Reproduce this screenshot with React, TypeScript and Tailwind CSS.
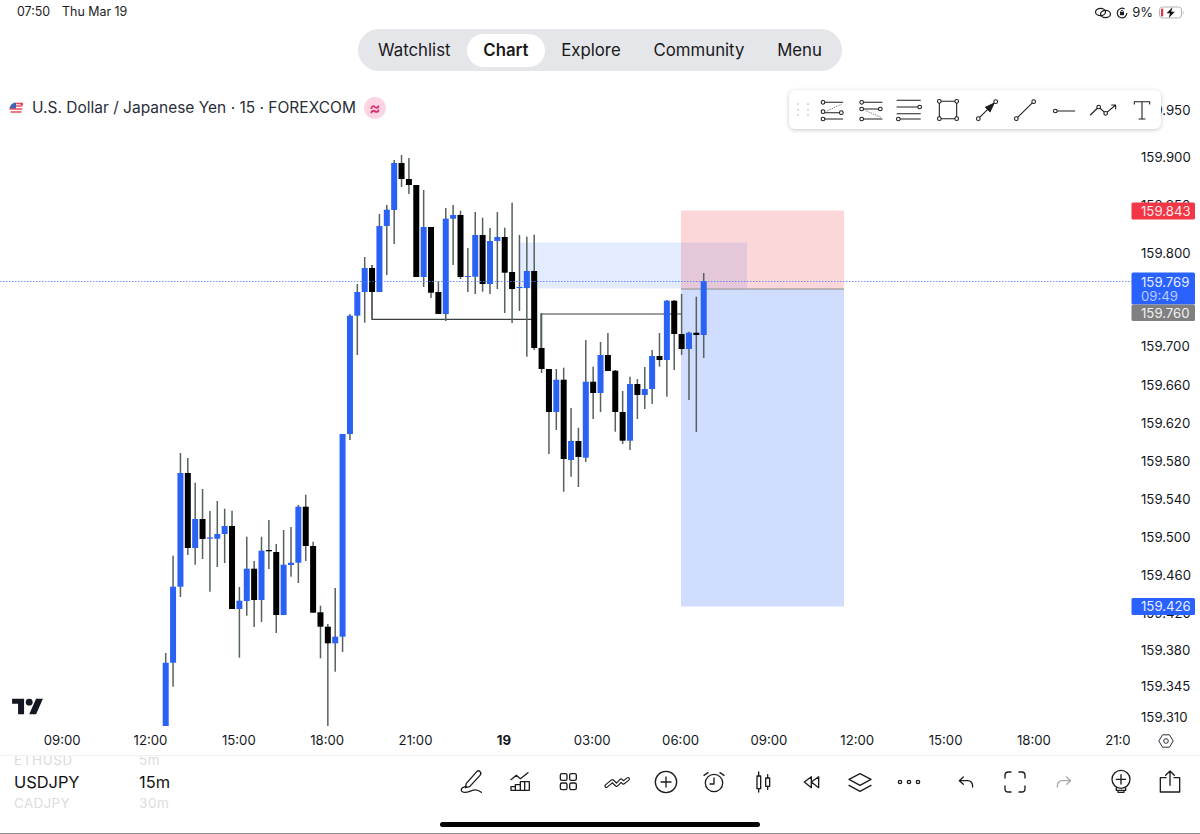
import React from 'react';

const sans = 'font-["Inter","Liberation_Sans",sans-serif]';

type Candle = [number, number, number, number, 'b' | 'k'];

// wick top, wick bottom, body top, body bottom (page px)
const candles: Candle[] = [
  [653, 726, 662.7, 726, 'b'], [555.7, 686.7, 586.7, 662.7, 'b'], [453, 597, 473, 586.7, 'b'], [458, 555, 473, 548, 'k'],
  [482.7, 564.7, 519, 548, 'b'], [489, 559, 519, 539, 'k'], [511, 591.7, 537.4, 538.7, 'b'], [501, 567, 534, 538.7, 'b'],
  [508.7, 563, 526, 534, 'b'], [510.7, 609, 526, 609, 'k'], [587, 657.7, 600.7, 609, 'b'], [536.7, 615.7, 568.7, 601, 'b'],
  [561, 627, 568.7, 600, 'k'], [536.7, 622, 550.7, 600, 'b'], [520, 569, 550, 551.3, 'k'], [544, 633, 552, 615, 'k'],
  [530, 615, 564.7, 615, 'b'], [527, 576.7, 562.7, 565, 'b'], [505, 583, 506.7, 562.7, 'b'], [494.7, 561, 506.7, 546, 'k'],
  [541.7, 612.7, 546, 612.7, 'k'], [605.7, 658.3, 612.3, 626.7, 'k'], [624, 726, 626.7, 643.3, 'k'], [588, 671.7, 636.7, 643.3, 'b'],
  [434, 652, 434, 636.7, 'b'], [314, 440, 315.7, 434, 'b'], [284, 355, 292, 315.7, 'b'], [257, 322.7, 268, 292, 'b'],
  [265, 319, 268, 292, 'k'], [214, 292, 226, 292, 'b'], [205, 275, 209.7, 226, 'b'], [160, 244, 163, 210, 'b'],
  [155, 187, 163, 179, 'k'], [158, 194, 179, 185, 'k'], [185, 277, 185, 277, 'k'], [190, 287, 227, 277, 'b'],
  [227, 298, 227, 292.7, 'k'], [281, 314, 292, 314, 'k'], [208, 321, 218.7, 314, 'b'], [205, 265, 215, 218.7, 'b'],
  [210.7, 279, 215, 277, 'k'], [248, 292, 276, 277, 'b'], [212, 294, 235, 276.7, 'b'], [217.7, 291.7, 235, 284, 'k'],
  [228, 294, 241, 284, 'b'], [212, 289, 237, 241, 'b'], [227.7, 313, 237, 272.7, 'k'], [202.7, 323, 272, 289, 'k'],
  [235, 311, 287, 288, 'b'], [236.7, 356.7, 271, 288, 'b'], [234.7, 350, 271, 348, 'k'], [313, 373, 348, 369, 'k'],
  [369, 454, 369, 412, 'k'], [369, 430, 379.7, 412, 'b'], [367.7, 491.7, 379.7, 459, 'k'], [408, 476.7, 441, 460, 'b'],
  [427.7, 487, 441, 457, 'k'], [340, 462, 381.7, 457.7, 'b'], [366.7, 419, 381.7, 393, 'k'], [342, 412, 355, 393, 'b'],
  [333, 371, 355, 371, 'k'], [370, 431.7, 370.7, 412, 'k'], [391, 444, 412, 440.7, 'k'], [376.7, 450, 384, 440.7, 'b'],
  [379, 419, 384, 395, 'k'], [367, 409, 389, 395, 'b'], [350, 404, 356, 389, 'b'], [333, 366.7, 356, 360, 'k'],
  [300, 396.7, 300.7, 360, 'b'], [300, 370, 300.7, 334, 'k'], [294, 355, 334, 349, 'k'], [331.7, 400, 332.7, 349, 'b'],
  [296.7, 432, 332.7, 335, 'k'], [273, 358, 281, 335, 'b'],
];

const prices: [string, number][] = [
  ['159.950', 110], ['159.900', 157], ['159.850', 205], ['159.800', 253], ['159.700', 346], ['159.660', 385],
  ['159.620', 423], ['159.580', 461], ['159.540', 499], ['159.500', 537], ['159.460', 575], ['159.420', 613],
  ['159.380', 650], ['159.345', 686], ['159.310', 717],
];

const times = ['09:00', '12:00', '15:00', '18:00', '21:00', '19', '03:00', '06:00', '09:00', '12:00', '15:00', '18:00'];

function Chart() {
  return (
    <svg viewBox="0 71 1200 684" className="absolute inset-0 h-full w-full">
      <rect x="520" y="242.5" width="227" height="46" fill="#2962ff" fillOpacity="0.13" />
      <rect x="681" y="210.5" width="163" height="78.5" fill="#f23645" fillOpacity="0.2" />
      <rect x="681" y="289" width="163" height="317.5" fill="#2962ff" fillOpacity="0.22" />
      <line x1="681" y1="289" x2="844" y2="289" stroke="#8a8a8a" strokeWidth="1" />
      <path d="M372 265V319.4H532M541 348V314H681" fill="none" stroke="#3a4040" strokeWidth="1.2" />
      {candles.map(([wt, wb, bt, bb, c], i) => {
        const x = 165.7 + 7.37 * i;
        return (
          <g key={i}>
            <rect x={x - 0.75} y={wt} width="1.5" height={wb - wt} fill="#56625f" />
            <rect x={x - 3} y={bt} width="6" height={Math.max(bb - bt, 1)} fill={c === 'b' ? '#2962f5' : '#000'} />
          </g>
        );
      })}
      <line x1="0" y1="281.5" x2="1132" y2="281.5" stroke="#4f7dff" strokeWidth="1" strokeDasharray="1.5 1.5" strokeOpacity="0.85" />
      <g className={sans} fontSize="13.2" fill="#131722">
        {prices.map(([p, y]) => (
          <text key={p} x="1141" y={y + 5}>{p}</text>
        ))}
      </g>
      <g className={sans} fontSize="13.2">
        <rect x="1131.5" y="202.5" width="63.5" height="17" rx="1.5" fill="#f23645" />
        <text x="1141" y="216" fill="#ffe9ea">159.843</text>
        <rect x="1131.5" y="272.5" width="63.5" height="32" rx="1.5" fill="#2962ff" />
        <text x="1141" y="286.5" fill="#e8eeff">159.769</text>
        <text x="1141" y="300.5" fill="#b9cbff">09:49</text>
        <rect x="1131.5" y="304.5" width="63.5" height="16.5" rx="1.5" fill="#808080" />
        <text x="1141" y="317.5" fill="#f2f2f2">159.760</text>
        <rect x="1131.5" y="598" width="63.5" height="17" rx="1.5" fill="#2962ff" />
        <text x="1141" y="611" fill="#e8eeff">159.426</text>
      </g>
    </svg>
  );
}

function Ico({ children, color = '#1c1c1e', sw = 4 }: { children: React.ReactNode; color?: string; sw?: number }) {
  return (
    <svg viewBox="-42 -42 84 84" className="h-[28px] w-[28px]" fill="none" stroke={color} strokeWidth={sw} strokeLinecap="round" strokeLinejoin="round">
      {children}
    </svg>
  );
}

const Dot = ({ x, y }: { x: number; y: number }) => <circle cx={x} cy={y} r="5.5" fill="#fff" />;

const drawingTools = [
  <>
    <path d="M-22 -23H32M-20 8H23M-22 27H32" />
    <path d="M-16 3L29 -17" strokeDasharray="3 3" strokeWidth="2" strokeLinecap="butt" />
    <Dot x={-27} y={-23} /><Dot x={-27} y={5} /><Dot x={-27} y={27} /><Dot x={28} y={8} />
  </>,
  <>
    <path d="M-23 -23H33M-23 -3H23M-23 27H33" />
    <path d="M-16 2L30 22" strokeDasharray="3 3" strokeWidth="2" strokeLinecap="butt" />
    <Dot x={-28} y={-23} /><Dot x={-28} y={-3} /><Dot x={28} y={-3} /><Dot x={-28} y={27} />
  </>,
  <>
    <path d="M-36 -29H34M-36 -9H27M-36 11H34M-27 27H34" />
    <Dot x={32} y={-9} /><Dot x={-32} y={27} />
  </>,
  <>
    <rect x="-26" y="-26" width="52" height="52" />
    <Dot x={-26} y={-26} /><Dot x={26} y={-26} /><Dot x={-26} y={26} /><Dot x={26} y={26} />
  </>,
  <>
    <path d="M-26 26L26 -25" />
    <path d="M21 -20L-4 -8L9 5Z" fill="#1c1c1e" />
    <Dot x={-26} y={26} /><Dot x={26} y={-25} />
  </>,
  <>
    <path d="M-26 26L26 -25" />
    <Dot x={-26} y={26} /><Dot x={26} y={-25} />
  </>,
  <>
    <path d="M-26 3H32" />
    <Dot x={-26} y={3} />
  </>,
  <>
    <path d="M-38 15L-13 -9L8 10L38 -15M26 -15H38V-3" />
    <Dot x={-13} y={-9} /><Dot x={8} y={10} />
  </>,
  <path d="M-23 -18V-25H23V-18M0 -25V27M-9 27H9" />,
];

const bottomLeft = [
  <>
    <path d="M18 -32Q24 -36 28 -30Q32 -26 27 -20L-4 14L-17 17L-14 4Z" />
    <path d="M-14 14C-32 15 -34 30 -20 31C0 32 8 14 31 31" />
  </>,
  <>
    <path d="M-27 -7L-11 -20L1 -10L24 -28" />
    <path d="M-27 25V14H-14V25ZM-14 25V8H1V25ZM1 25V-1H28V25ZM14 25V-1M-27 25H28" />
  </>,
  <>
    <rect x="-23" y="-25" width="20" height="20" rx="5" />
    <rect x="5" y="-25" width="20" height="20" rx="5" />
    <rect x="-23" y="3" width="20" height="20" rx="5" />
    <rect x="5" y="3" width="20" height="20" rx="5" />
  </>,
  <>
    <path d="M-32 12L-14 -3L-1 9L12 -5L19 2L33 -9" strokeWidth="12" />
    <path d="M-32 12L-14 -3L-1 9L12 -5L19 2L33 -9" stroke="#fff" strokeWidth="5" />
  </>,
  <>
    <circle r="32" />
    <path d="M-15 0H15M0 -15V15" />
  </>,
  <>
    <circle cy="3" r="26" />
    <path d="M0 -12V6H-12M-30 -20L-18 -28M30 -20L18 -28" />
  </>,
  <>
    <path d="M-13 -30V-18M-13 20V30M14 -22V-12M14 13V22" />
    <rect x="-18" y="-18" width="11" height="38" />
    <rect x="8" y="-12" width="12" height="25" />
  </>,
  <path d="M-2 -16L-23 0L-2 17ZM20 -16L-2 0L20 17Z" />,
];

const bottomRight = [
  <>
    <path d="M-33 -8L0 -25L33 -8L0 10Z" />
    <path d="M-33 10L0 28L33 10" />
  </>,
  <>
    <circle cx="-27" r="5" /><circle r="5" /><circle cx="27" r="5" />
  </>,
];

function Sep() {
  return <div className="h-[20px] w-px bg-[#f0f0f0]" />;
}

function Slot({ children }: { children: React.ReactNode }) {
  return <div className="flex w-[48.7px] justify-center">{children}</div>;
}

function BottomBar() {
  return (
    <div className="relative z-10 flex h-[78px] border-t border-[#f1f1f1] bg-white">
      <div className="flex h-[56px] w-[440px] flex-col items-start overflow-hidden pl-[14px]">
        <div className="-mt-[3px] flex h-[14px] text-[13.5px] leading-[14px] text-[#dcdcdc]">
          <span className="w-[125px] tracking-[0.6px]">ETHUSD</span>
          <span className="tracking-[0.6px]">5m</span>
        </div>
        <div className="mt-[3px] flex h-[24px] text-[16.4px] leading-[24px] text-[#111]">
          <span className="w-[125px]">USDJPY</span>
          <span>15m</span>
        </div>
        <div className="mt-[2px] flex h-[14px] text-[13.5px] leading-[14px] text-[#dcdcdc]">
          <span className="w-[125px] tracking-[0.3px]">CADJPY</span>
          <span className="tracking-[0.6px]">30m</span>
        </div>
      </div>
      <div className="flex h-[52px] items-center pl-[6.6px]">
        {bottomLeft.map((icon, i) => (
          <Slot key={i}><Ico>{icon}</Ico></Slot>
        ))}
        {bottomRight.map((icon, i) => (
          <Slot key={i}><Ico>{icon}</Ico></Slot>
        ))}
        <div className="flex w-0 justify-center"><Sep /></div>
        <div className="w-[8.5px]" />
        <Slot><Ico><path d="M-8 -15L-20 -4L-8 7M-20 -4H5Q20 -4 20 15" /></Ico></Slot>
        <Slot>
          <Ico>
            <path d="M-30 -12V-20Q-30 -30 -20 -30H-12M12 -30H20Q30 -30 30 -20V-12M30 12V20Q30 30 20 30H12M-12 30H-20Q-30 30 -30 20V12" />
          </Ico>
        </Slot>
        <Slot><Ico color="#a8a8a8"><path d="M8 -15L20 -4L8 7M20 -4H-5Q-20 -4 -20 15" /></Ico></Slot>
        <div className="flex w-0 justify-center"><Sep /></div>
        <div className="w-[8.6px]" />
        <Slot>
          <Ico>
            <circle cy="-8" r="27" />
            <path d="M-14 -8H14M0 -22V6M-14 18V25H14V18M-9 25V31H9V25" />
          </Ico>
        </Slot>
        <Slot>
          <Ico>
            <path d="M-12 -13H-29V30H29V-13H12M0 10V-33M-13 -20L0 -33L13 -20" />
          </Ico>
        </Slot>
      </div>
      <div className="absolute bottom-[6px] left-[440px] h-[5px] w-[320px] rounded-full bg-black" />
    </div>
  );
}

function StatusBar() {
  return (
    <div className="flex h-[29px] items-center justify-between pl-[17px] pr-[15px] pb-[4px] text-[12.4px] text-[#1c1c1e]">
      <div className="flex gap-[12px]">
        <span>07:50</span>
        <span>Thu Mar 19</span>
      </div>
      <div className="flex items-center gap-[4px]">
        <svg viewBox="0 0 18 12" className="h-[12px] w-[18px]" fill="none" stroke="#1c1c1e" strokeWidth="1.2">
          <ellipse cx="6.5" cy="5" rx="5" ry="3.6" />
          <ellipse cx="11.5" cy="7" rx="5" ry="3.6" />
        </svg>
        <svg viewBox="0 0 12 12" className="h-[12px] w-[12px]" fill="none" stroke="#1c1c1e" strokeWidth="1.2">
          <path d="M10.8 6A4.8 4.8 0 1 1 8.6 2" />
          <rect x="4" y="5" width="4" height="3.2" fill="#1c1c1e" stroke="none" />
          <circle cx="6" cy="4.6" r="1.2" strokeWidth="0.9" />
        </svg>
        <span className="text-[13px]">9%</span>
        <svg viewBox="0 0 26 13" className="ml-[2px] h-[13px] w-[26px]">
          <rect x="0.5" y="1" width="22" height="11" rx="3" fill="none" stroke="#b5b5b5" />
          <rect x="2" y="2.5" width="2.2" height="8" rx="1" fill="#e5303f" />
          <path d="M23.8 4.5Q25.5 6.5 23.8 8.5Z" fill="#b5b5b5" />
          <path d="M13.5 1.2L7.5 7.2H11L9.8 12L15.8 5.8H12.2Z" fill="#111" />
        </svg>
      </div>
    </div>
  );
}

function Nav() {
  const items = ['Watchlist', 'Chart', 'Explore', 'Community', 'Menu'];
  return (
    <div className="flex justify-center">
      <div className="flex h-[42px] items-center rounded-full bg-[#e5e6ea] p-[4px] text-[16.8px] text-[#18181b]">
        {items.map(item => (
          <div
            key={item}
            className={item === 'Chart'
              ? 'flex h-[33px] items-center rounded-full bg-white px-[16.4px] pt-px font-semibold'
              : 'flex h-[33px] items-center px-[16.4px] pt-px'}
          >
            {item}
          </div>
        ))}
      </div>
    </div>
  );
}

function Legend() {
  return (
    <div className="relative z-10 flex h-[72px] items-center gap-[7px] pl-[9px] pt-[2px] text-[15.5px] text-[#2a2e39]">
      <svg viewBox="0 0 16 16" className="h-[16px] w-[16px]">
        <circle cx="12.5" cy="4" r="3.5" fill="#fff" stroke="#eee" strokeWidth="0.5" />
        <circle cx="12.5" cy="4" r="1.6" fill="#e5303f" />
        <circle cx="7" cy="9" r="6.5" fill="#fff" />
        <path d="M.6 9A6.5 6.5 0 0 1 7 2.5V9Z" fill="#3f64b5" />
        <path d="M7 3.5H12M7 6H13.2M.6 9H13.5M1.5 12H12.5" stroke="#e8505b" strokeWidth="1.3" />
      </svg>
      <span>U.S. Dollar / Japanese Yen · 15 · FOREXCOM</span>
      <span className="ml-[1px] flex h-[22px] w-[22px] items-center justify-center rounded-full bg-[#fbd5e4] text-[17px] font-semibold leading-none text-[#d6306f]">≈</span>
    </div>
  );
}

function DrawingToolbar() {
  return (
    <div className="absolute left-[788.5px] top-[19px] z-20 flex h-[39px] w-[372.5px] items-center rounded-[6px] bg-white shadow-[0_1px_4px_rgba(0,0,0,0.22)]">
      <div className="grid w-[24px] shrink-0 grid-cols-2 justify-center gap-x-[4px] gap-y-[3.5px] pl-[8px]">
        {Array.from({ length: 6 }).map((_, i) => (
          <span key={i} className="h-[2px] w-[2px] rounded-full bg-[#cfd2d6]" />
        ))}
      </div>
      {drawingTools.map((icon, i) => (
        <div key={i} className="flex w-[38.8px] justify-center"><Ico sw={3.2}>{icon}</Ico></div>
      ))}
    </div>
  );
}

function TimeAxis() {
  return (
    <div className="absolute inset-x-0 bottom-0 z-10 flex h-[29px] items-center pl-[18px] pt-[1px] text-[13.2px] text-[#131722]">
      {times.map((t, i) => (
        <span key={i} className={t === '19' ? 'w-[88.35px] text-center font-bold' : 'w-[88.35px] text-center'}>{t}</span>
      ))}
      <span className="w-[52px] overflow-hidden whitespace-nowrap pl-[27px] text-left">21:00</span>
      <svg viewBox="0 0 16 16" className="ml-[28px] h-[16px] w-[16px]" fill="none" stroke="#2a2e39" strokeWidth="1">
        <path d="M4.5 1.8H11.5L15.2 8L11.5 14.2H4.5L.8 8Z" />
        <circle cx="8" cy="8" r="2.3" />
      </svg>
    </div>
  );
}

export default function App() {
  return (
    <div className={`flex h-[834px] w-[1200px] flex-col overflow-hidden border-b border-[#8c8c8c] bg-white ${sans}`}>
      <StatusBar />
      <Nav />
      <div className="relative flex-1">
        <Chart />
        <Legend />
        <DrawingToolbar />
        <svg viewBox="0 4 36 21" className="absolute left-[12px] top-[626px] z-10 h-[18px] w-[31px]" fill="#131722">
          <path d="M14 6H0V12H7V24H14ZM28 24H20L28 6H36Z" />
          <circle cx="20" cy="10" r="4" />
        </svg>
        <TimeAxis />
      </div>
      <BottomBar />
    </div>
  );
}
